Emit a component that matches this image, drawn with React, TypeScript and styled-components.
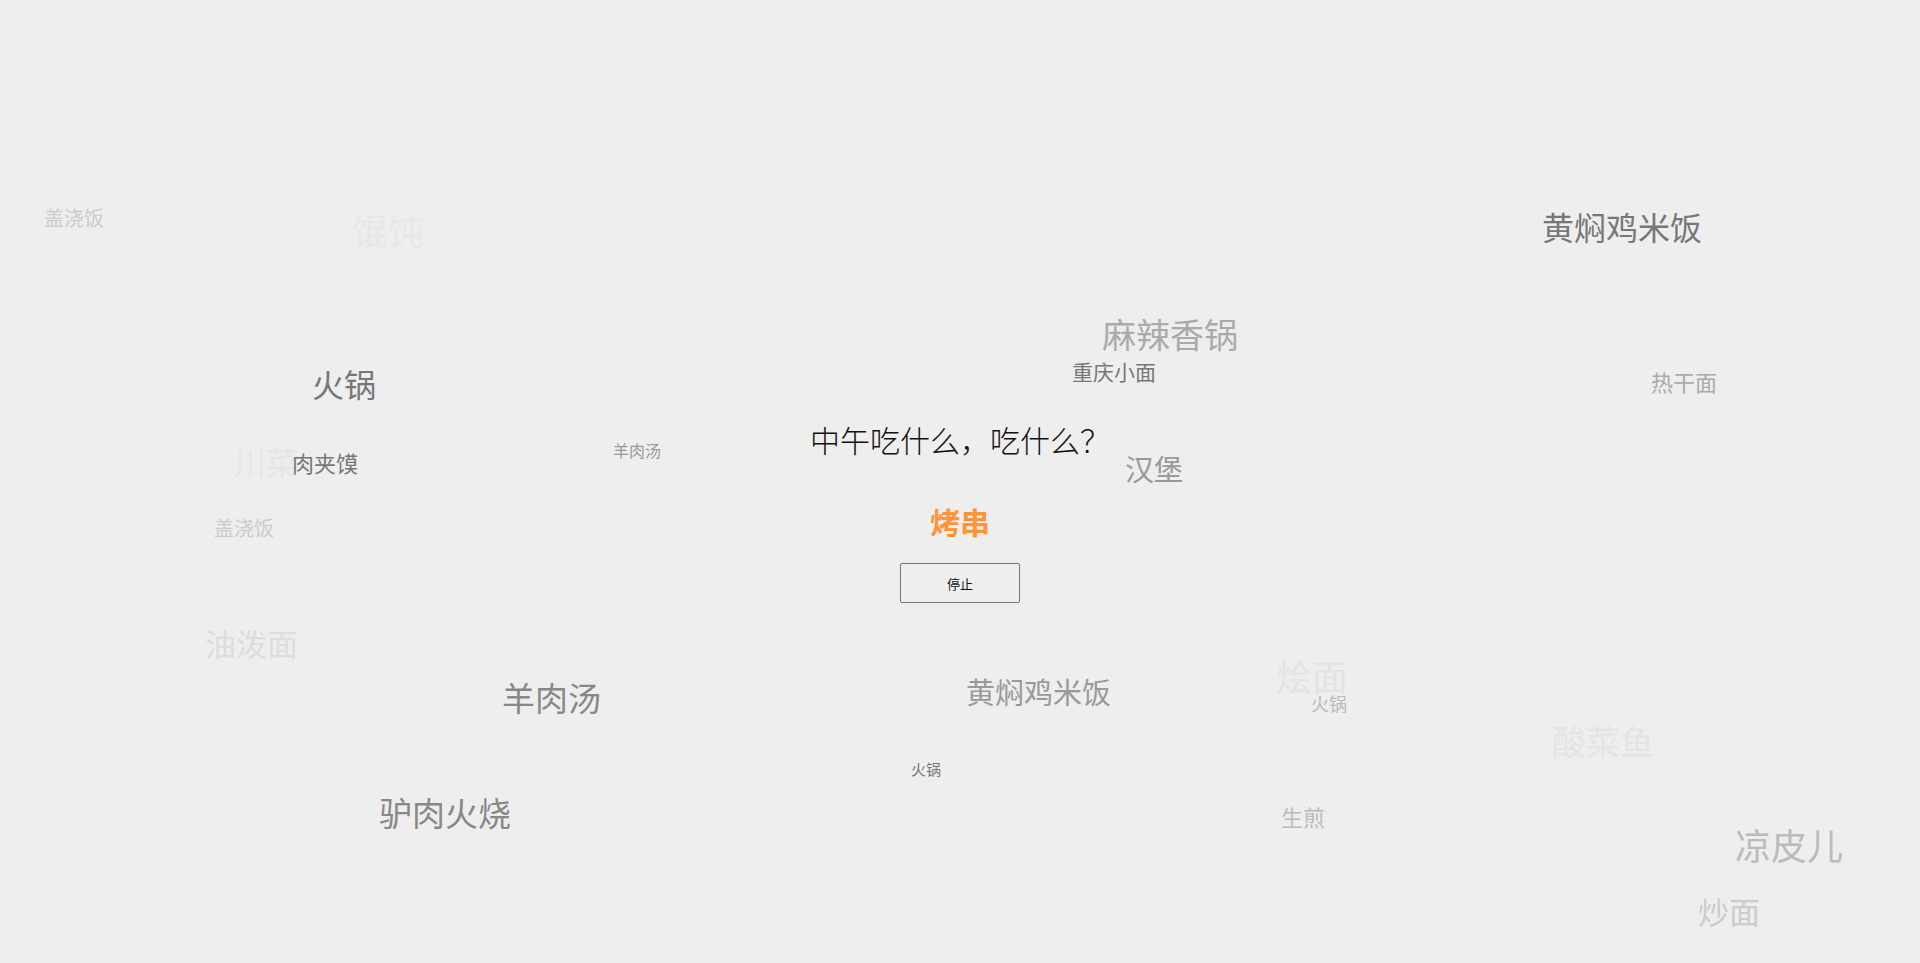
import React from "react";
import styled, { createGlobalStyle } from "styled-components";

const GlobalStyle = createGlobalStyle`
  html, body {
    margin: 0;
    padding: 0;
    background: #eeeeee;
  }
  body {
    font-family: "Noto Sans CJK SC", "Noto Sans", sans-serif;
  }
`;

const Page = styled.div`
  position: relative;
  width: 100%;
  height: 963px;
  overflow: hidden;
  background: #eeeeee;
`;

const Stage = styled.main`
  position: relative;
  z-index: 2;
  display: flex;
  flex-direction: column;
  align-items: center;
  padding-top: 418px;
`;

const Title = styled.h1`
  margin: 0;
  font-size: 30px;
  font-weight: 300;
  color: #111;
  line-height: 43px;
  white-space: nowrap;
`;

const Result = styled.div`
  margin-top: 39px;
  font-size: 30px;
  font-weight: 700;
  line-height: 43px;
  color: #ff9438;
`;

const StopButton = styled.button`
  margin-top: 20px;
  width: 120px;
  height: 40px;
  box-sizing: border-box;
  border: 1px solid #767676;
  border-radius: 2px;
  background: #efefef;
  color: #111;
  font-family: "Noto Sans CJK SC", sans-serif;
  font-size: 13px;
  font-weight: 400;
  cursor: pointer;
  padding: 0;
`;

const Word = styled.span<{ $size: number; $color: string }>`
  position: absolute;
  z-index: 1;
  font-size: ${(p) => p.$size}px;
  line-height: 1;
  color: ${(p) => p.$color};
  white-space: nowrap;
  user-select: none;
`;

type FloatWord = { text: string; x: number; y: number; size: number; color: string };

const words: FloatWord[] = [
  { text: "盖浇饭", x: 44, y: 208, size: 20, color: "#cccccc" },
  { text: "馄饨", x: 352, y: 211, size: 36, color: "#e7e7e7" },
  { text: "火锅", x: 312, y: 367, size: 32, color: "#777777" },
  { text: "川菜", x: 234, y: 445, size: 32, color: "#e6e6e6" },
  { text: "肉夹馍", x: 292, y: 451, size: 22, color: "#777777" },
  { text: "盖浇饭", x: 214, y: 518, size: 20, color: "#cccccc" },
  { text: "黄焖鸡米饭", x: 1542, y: 210, size: 32, color: "#777777" },
  { text: "麻辣香锅", x: 1102, y: 317, size: 34, color: "#aaaaaa" },
  { text: "重庆小面", x: 1072, y: 361, size: 21, color: "#777777" },
  { text: "汉堡", x: 1125, y: 454, size: 29, color: "#999999" },
  { text: "热干面", x: 1651, y: 370, size: 22, color: "#aaaaaa" },
  { text: "羊肉汤", x: 613, y: 442, size: 16, color: "#999999" },
  { text: "油泼面", x: 205, y: 627, size: 31, color: "#dddddd" },
  { text: "羊肉汤", x: 502, y: 681, size: 33, color: "#888888" },
  { text: "驴肉火烧", x: 379, y: 796, size: 33, color: "#888888" },
  { text: "黄焖鸡米饭", x: 966, y: 677, size: 29, color: "#999999" },
  { text: "烩面", x: 1276, y: 657, size: 36, color: "#e4e4e4" },
  { text: "火锅", x: 1311, y: 694, size: 18, color: "#bbbbbb" },
  { text: "火锅", x: 911, y: 761, size: 15, color: "#777777" },
  { text: "生煎", x: 1281, y: 805, size: 22, color: "#bbbbbb" },
  { text: "酸菜鱼", x: 1552, y: 724, size: 34, color: "#e4e4e4" },
  { text: "凉皮儿", x: 1735, y: 826, size: 36, color: "#bbbbbb" },
  { text: "炒面", x: 1698, y: 895, size: 31, color: "#cccccc" },
];

export default function App() {
  return (
    <>
      <GlobalStyle />
      <Page>
        {words.map((w, i) => (
          <Word key={i} $size={w.size} $color={w.color} style={{ left: w.x, top: w.y }}>
            {w.text}
          </Word>
        ))}
        <Stage>
          <Title>中午吃什么，吃什么？</Title>
          <Result>烤串</Result>
          <StopButton type="button">停止</StopButton>
        </Stage>
      </Page>
    </>
  );
}
